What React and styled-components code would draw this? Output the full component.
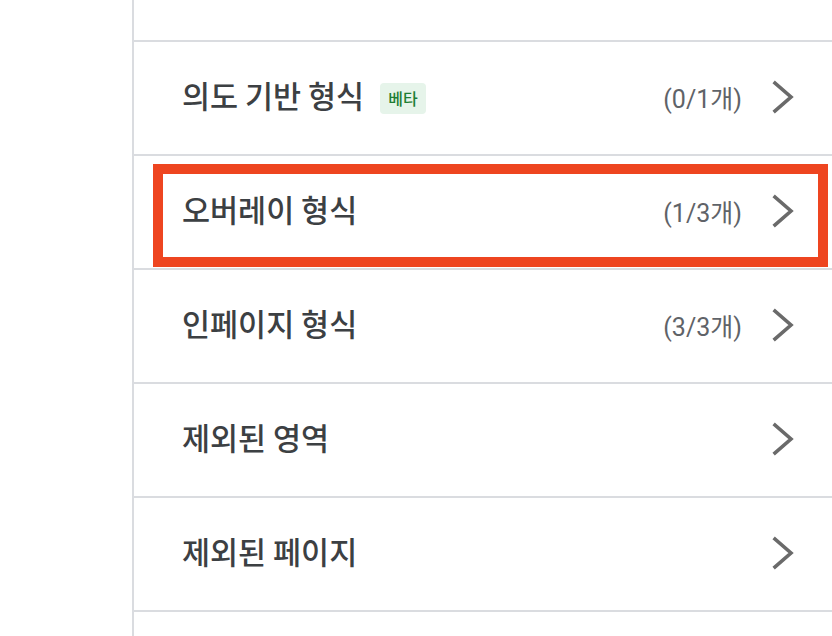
import React from "react";
import styled, { createGlobalStyle } from "styled-components";

const GlobalStyle = createGlobalStyle`
  html, body {
    margin: 0;
    padding: 0;
    background: #ffffff;
  }
  body {
    font-family: "Noto Sans CJK KR", "Noto Sans", Roboto, sans-serif;
  }
`;

const items = [
  { label: "의도 기반 형식", badge: "베타", count: "(0/1개)" },
  { label: "오버레이 형식", count: "(1/3개)", highlight: true },
  { label: "인페이지 형식", count: "(3/3개)" },
  { label: "제외된 영역" },
  { label: "제외된 페이지" },
];

const Chevron = () => (
  <svg width="22" height="34" viewBox="0 0 22 34" fill="none">
    <path
      d="M3 3 L19 17 L3 31"
      stroke="#6a6a6a"
      strokeWidth="3.6"
      strokeLinecap="square"
      strokeLinejoin="miter"
    />
  </svg>
);

const App = () => {
  return (
    <>
      <GlobalStyle />
      <Page>
        <Gutter />
        <Panel>
          <TopSpace />
          <List>
            {items.map((item) => (
              <Row key={item.label}>
                <Title>
                  {item.label}
                  {item.badge && <Badge>{item.badge}</Badge>}
                </Title>
                <Meta>
                  {item.count && <Count>{item.count}</Count>}
                  <Chevron />
                </Meta>
                {item.highlight && <Highlight />}
              </Row>
            ))}
          </List>
        </Panel>
      </Page>
    </>
  );
};

const Page = styled.div`
  display: flex;
  width: 832px;
  height: 636px;
  overflow: hidden;
`;

const Gutter = styled.div`
  width: 132px;
  flex-shrink: 0;
`;

const Panel = styled.div`
  flex: 1;
  border-left: 2px solid #dadce0;
  display: flex;
  flex-direction: column;
`;

const TopSpace = styled.div`
  height: 40px;
  border-bottom: 2px solid #dadce0;
`;

const List = styled.div`
  display: flex;
  flex-direction: column;
`;

const Row = styled.div`
  position: relative;
  height: 112px;
  border-bottom: 2px solid #dadce0;
  display: flex;
  align-items: center;
  justify-content: space-between;
  padding: 0 38px 0 48px;
`;

const Title = styled.div`
  display: flex;
  align-items: center;
  gap: 16px;
  padding-bottom: 6px;
  font-size: 30.5px;
  font-weight: 500;
  color: #3c4043;
`;

const Badge = styled.span`
  display: inline-flex;
  align-items: center;
  justify-content: center;
  width: 46px;
  height: 31px;
  margin-top: 6px;
  border-radius: 4px;
  background: #e6f4ea;
  color: #1e7e34;
  font-size: 16px;
  font-weight: 500;
`;

const Meta = styled.div`
  display: flex;
  align-items: center;
  gap: 30px;
  padding-bottom: 2px;
`;

const Count = styled.span`
  font-family: Roboto, "Noto Sans CJK KR", sans-serif;
  font-size: 25px;
  color: #5f6368;
`;

const Highlight = styled.div`
  position: absolute;
  left: 19px;
  right: 4px;
  top: 8px;
  bottom: 1px;
  border: 10px solid #ee4520;
  pointer-events: none;
`;

export default App;
